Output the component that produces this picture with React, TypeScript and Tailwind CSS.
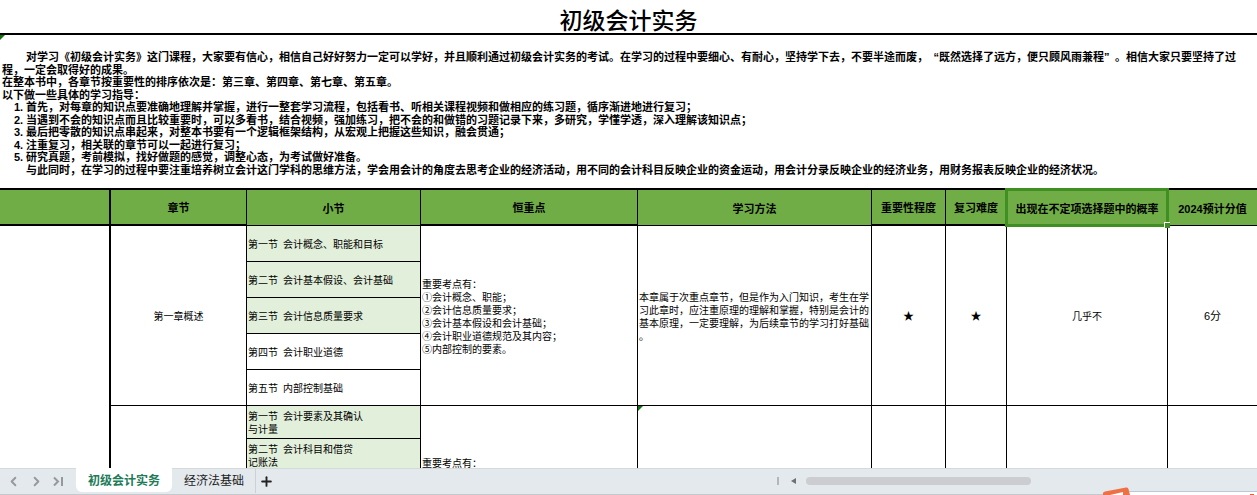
import React, { useState } from 'react';
import { ChevronLeft, ChevronRight, Plus } from 'lucide-react';

const INTRO = [
  { text: '对学习《初级会计实务》这门课程，大家要有信心，相信自己好好努力一定可以学好，并且顺利通过初级会计实务的考试。在学习的过程中要细心、有耐心，坚持学下去，不要半途而废，', quote: '既然选择了远方，便只顾风雨兼程', after: '。相信大家只要坚持了过', indent: true },
  { text: '程，一定会取得好的成果。' },
  { text: '在整本书中，各章节按重要性的排序依次是：第三章、第四章、第七章、第五章。' },
  { text: '以下做一些具体的学习指导：' },
  { no: '1.', text: '首先，对每章的知识点要准确地理解并掌握，进行一整套学习流程，包括看书、听相关课程视频和做相应的练习题，循序渐进地进行复习；' },
  { no: '2.', text: '当遇到不会的知识点而且比较重要时，可以多看书，结合视频，强加练习，把不会的和做错的习题记录下来，多研究，学懂学透，深入理解该知识点；' },
  { no: '3.', text: '最后把零散的知识点串起来，对整本书要有一个逻辑框架结构，从宏观上把握这些知识，融会贯通；' },
  { no: '4.', text: '注重复习，相关联的章节可以一起进行复习；' },
  { no: '5.', text: '研究真题，考前模拟，找好做题的感觉，调整心态，为考试做好准备。' },
  { text: '与此同时，在学习的过程中要注重培养树立会计这门学科的思维方法，学会用会计的角度去思考企业的经济活动，用不同的会计科目反映企业的资金运动，用会计分录反映企业的经济业务，用财务报表反映企业的经济状况。', indent: true },
];

const HEADERS = [
  { name: '', border: 'border-r-2 border-b-2' },
  { name: '章节', border: 'border-r border-b-2' },
  { name: '小节', border: 'border-r border-b' },
  { name: '恒重点', border: 'border-r border-b-2' },
  { name: '学习方法', border: 'border-r border-b' },
  { name: '重要性程度', border: 'border-r border-b-2' },
  { name: '复习难度', border: 'border-r border-b-2' },
  { name: '出现在不定项选择题中的概率', border: 'border-r border-b', selected: true },
  { name: '2024预计分值', border: 'border-b' },
];

const SECTIONS = [
  { no: '第二节', name: '会计基本假设、会计基础', marked: true },
  { no: '第三节', name: '会计信息质量要求', marked: true },
  { no: '第四节', name: '会计职业道德', marked: false },
  { no: '第五节', name: '内部控制基础', marked: false },
];

const KEY_POINTS = [
  '重要考点有：',
  '①会计概念、职能；',
  '②会计信息质量要求；',
  '③会计基本假设和会计基础；',
  '④会计职业道德规范及其内容；',
  '⑤内部控制的要素。',
];

const SHEETS = ['初级会计实务', '经济法基础'];

const Corner = () => (
  <span className="absolute top-0 left-0 size-[5px] bg-[#107010] [clip-path:polygon(0_0,100%_0,0_100%)]" />
);

const SectionCell = ({ no, name, rest, marked, tall = true }: any) => (
  <td className={`border-r border-b border-black px-px text-left ${tall ? 'h-9' : 'h-[33px]'} ${marked ? 'bg-[#e2efda]' : 'bg-white'}`}>
    {no}&ensp;{name}
    {rest && <><br />{rest}</>}
  </td>
);

const SheetTable = () => (
  <table className="w-full table-fixed border-separate border-spacing-0 text-center text-[10px] leading-[13px] [&_td]:pt-0.5">
    <colgroup>
      <col className="w-[111px]" />
      <col className="w-[136px]" />
      <col className="w-[174px]" />
      <col className="w-[217px]" />
      <col className="w-[234px]" />
      <col className="w-[74px]" />
      <col className="w-[61px]" />
      <col className="w-[161px]" />
      <col />
    </colgroup>
    <thead>
      <tr className="text-[11px]">
        {HEADERS.map((h, i) => (
          <th key={i} className={`relative h-[38px] border-t-2 border-black bg-[#70ad47] px-0 pt-[3px] pb-0 font-bold whitespace-nowrap ${h.border}`}>
            {h.name}
            {h.selected && (
              <>
                <span className="absolute -inset-0.5 z-10 border-3 border-[#3f8f22]" />
                <span className="absolute -right-[3px] -bottom-[3px] z-20 size-[6px] border-t border-l border-white bg-[#3f8f22]" />
              </>
            )}
          </th>
        ))}
      </tr>
    </thead>
    <tbody>
      <tr>
        <td rowSpan={7} className="border-r-2 border-black" />
        <td rowSpan={5} className="border-r border-b border-black">第一章概述</td>
        <SectionCell no="第一节" name="会计概念、职能和目标" marked />
        <td rowSpan={5} className="border-r border-b border-black px-px text-left">
          {KEY_POINTS.map(p => <p key={p}>{p}</p>)}
        </td>
        <td rowSpan={5} className="border-r border-b border-black px-px text-left">
          本章属于次重点章节，但是作为入门知识，考生在学<br />
          习此章时，应注重原理的理解和掌握，特别是会计的<br />
          基本原理，一定要理解，为后续章节的学习打好基础<br />
          。
        </td>
        <td rowSpan={5} className="border-r border-b border-black text-[11px]">★</td>
        <td rowSpan={5} className="border-r border-b border-black text-[11px]">★</td>
        <td rowSpan={5} className="border-r border-b border-black">几乎不</td>
        <td rowSpan={5} className="border-b border-black text-[11px]">6分</td>
      </tr>
      {SECTIONS.map(s => (
        <tr key={s.no}>
          <SectionCell {...s} />
        </tr>
      ))}
      <tr>
        <td rowSpan={2} className="border-r border-black" />
        <SectionCell no="第一节" name="会计要素及其确认" rest="与计量" marked tall={false} />
        <td rowSpan={2} className="border-r border-black px-px pt-[51px]! text-left align-top">重要考点有：</td>
        <td rowSpan={2} className="relative border-r border-black"><Corner /></td>
        <td rowSpan={2} className="border-r border-black" />
        <td rowSpan={2} className="border-r border-black" />
        <td rowSpan={2} className="border-r border-black" />
        <td rowSpan={2} />
      </tr>
      <tr>
        <SectionCell no="第二节" name="会计科目和借贷" rest="记账法" marked tall={false} />
      </tr>
    </tbody>
  </table>
);

const App: React.FC = () => {
  const [active, setActive] = useState(SHEETS[0]);

  return (
    <div className="flex h-screen flex-col overflow-hidden bg-white font-['Liberation_Sans','Noto_Sans_CJK_SC',sans-serif] text-black">
      <main className="min-h-0 flex-1 overflow-hidden">
        <h1 className="border-b-2 border-black pt-2.5 text-center text-[23px] leading-[23px] font-medium">初级会计实务</h1>

        <section className="relative flex h-[153px] flex-col justify-between pt-4 pb-3 pl-0.5 text-[11px] leading-3 font-bold whitespace-nowrap">
          <Corner />
          {INTRO.map(line => (
            <p key={line.text} className={line.indent ? 'pl-6' : line.no ? 'pl-3' : ''}>
              {line.no && <span className="inline-block w-3">{line.no}</span>}
              {line.text}
              {line.quote && (
                <>
                  <span className="inline-block w-[11px] text-right">“</span>
                  {line.quote}
                  <span className="inline-block w-[11px]">”</span>
                  {line.after}
                </>
              )}
            </p>
          ))}
        </section>

        <SheetTable />
      </main>

      <footer className="relative flex h-[27px] shrink-0 items-start border-t border-b border-t-[#d6d9dc] border-b-[#c5c9cd] bg-[#e4e9ee] text-xs">
        <div className="flex h-6 items-center gap-2 pr-[9px] pl-1.5 text-[#96999c]">
          <button aria-label="上一个工作表"><ChevronLeft size={15} strokeWidth={3} /></button>
          <button aria-label="下一个工作表"><ChevronRight size={15} strokeWidth={3} /></button>
          <button aria-label="最后一个工作表">
            <svg width="15" height="15" viewBox="0 0 15 15" fill="none" stroke="currentColor" strokeWidth="2">
              <path d="M2 3.500l4 4-4 4M10 3v9" />
            </svg>
          </button>
        </div>
        {SHEETS.map(name => (
          <button
            key={name}
            onClick={() => setActive(name)}
            className={`-mt-px h-6 pt-0.5 ${active === name ? 'rounded-b-md bg-white px-3 font-bold text-[#217a58]' : 'pr-[11px] pl-3 text-[#222]'}`}
          >
            {name}
          </button>
        ))}
        <button aria-label="新建工作表" className="flex h-6 items-center border-l border-[#cdd1d5] pl-[3px] text-[#222]">
          <Plus size={15} strokeWidth={3} />
        </button>

        <div className="ml-auto flex h-6 items-center pr-[226px]">
          <span className="h-2 w-0.5 bg-[#b3b7ba]" />
          <button aria-label="向左滚动" className="mr-2.5 ml-3">
            <svg width="5" height="6" viewBox="0 0 5 6" fill="#6d7174"><path d="M5 0v6L0 3z" /></svg>
          </button>
          <span className="h-2 w-[225px] rounded-full bg-[#cbcdd0]" />
        </div>

        {/* input method bar peeking over the bottom edge */}
        <svg className="absolute right-0 bottom-[-1px]" width="154" height="8" viewBox="0 0 154 8">
          <path d="M22 5h132v3H22z" fill="#fff" />
          <path d="M26 4.500h128" stroke="#b9c9d6" />
          <path d="M0 8V6Q0 5 2 4.500L23 .5Q25 0 25.500 2L27 8z" fill="#ee7044" />
          <path d="M7 8L20 5v3z" fill="#fff" />
          <path d="M147 7h4v1h-4z" fill="#ee5a3a" />
        </svg>
      </footer>
    </div>
  );
};

export default App;
